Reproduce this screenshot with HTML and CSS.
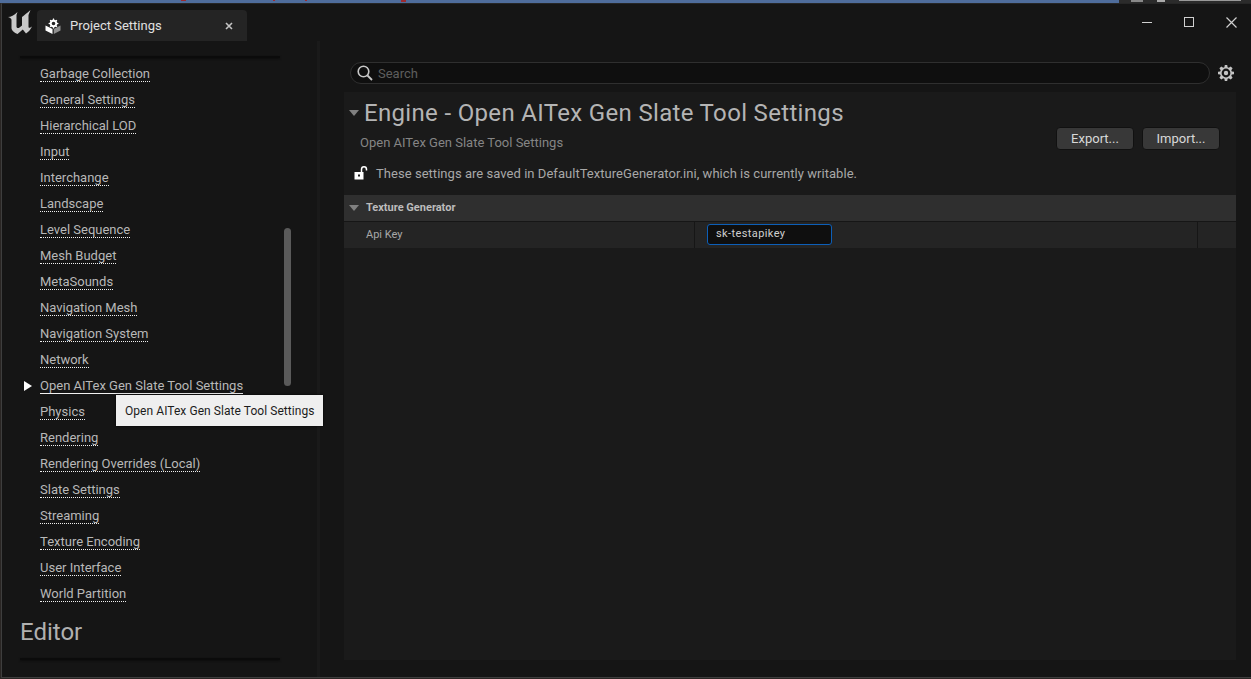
FILE: index.html
```html
<!DOCTYPE html>
<html lang="en">
<head>
    <meta charset="UTF-8">
    <title>Project Settings</title>
    <link rel="stylesheet" href="styles.css">
</head>
<body>

    <svg class="desktop-strip" width="1251" height="3">
        <rect width="1119" height="3" fill="#4f6d9c"/>
        <rect x="1119" width="132" height="3" fill="#2b2b2b"/>
        <rect x="181" width="5" height="1" fill="#9c2a30"/>
        <rect x="273" width="2" height="1" fill="#9c2a30"/>
        <rect x="305" width="2" height="1" fill="#9c2a30"/>
        <rect x="401" width="5" height="2" fill="#9c2a30"/>
        <rect x="1131" y="0" width="12" height="2" fill="#888"/>
        <rect x="1157" y="0" width="8" height="2" fill="#aaa"/>
        <rect x="1179" y="0" width="62" height="1" fill="#999"/>
    </svg>

    <div class="window">
        <div class="titlebar">
            <svg class="ue-logo" viewBox="0 0 24 24" width="24" height="24">
                <path fill="#c9c9c9" d="M0 7C3 7 6 5.500 9.500 2L8.500 5V16.500C8.500 18 10 18.500 11.500 17.500L14 15.500V7C16 5.500 19 3 22.500 0L20.500 5V16.500C20.500 18 21.500 18.500 24 16.500C22.500 19.500 21 21.500 18 23.500L14.800 19.500L9.500 24C6.500 23 3.500 20.500 3.500 18V10C3.500 8.500 2 7.500 0 7Z"/>
            </svg>
            <div class="tab">
                <svg class="tab-icon" viewBox="0 0 16 16" width="16" height="16">
                    <path fill="#fff" d="M8 0.500L9 0.500L9.300 1.700L10.500 2.300L11.500 1.700L12.300 2.500L11.700 3.500L12.200 4.700L13.400 5V6L12.200 6.300L11.700 7.500L12.300 8.500L11.500 9.300L10.500 8.700L9.300 9.200L9 10.400H8L7.700 9.200L6.500 8.700L5.500 9.300L4.700 8.500L5.300 7.500L4.800 6.300L3.600 6V5L4.800 4.700L5.300 3.500L4.700 2.500L5.500 1.700L6.500 2.300L7.700 1.700ZM8.500 3.700A1.800 1.800 0 1 0 8.500 7.300A1.800 1.800 0 1 0 8.500 3.700Z" fill-rule="evenodd"/>
                    <path fill="#fff" d="M0.500 7.500L7.500 11V16L0.500 12.500Z"/>
                    <path fill="#8f8f8f" d="M15.500 7.500L8.800 11V16L15.500 12.500Z"/>
                </svg>
                <span class="tab-title">Project Settings</span>
                <svg class="tab-close" viewBox="0 0 8 8" width="8" height="8">
                    <path d="M1 1L7 7M7 1L1 7" stroke="#c4c4c4" stroke-width="1.600"/>
                </svg>
            </div>
            <div class="window-controls">
                <svg viewBox="0 0 10 10" width="10" height="10"><path d="M0 5.500H10" stroke="#d0d0d0"/></svg>
                <svg viewBox="0 0 10 10" width="10" height="10"><rect x="0.500" y="0.500" width="9" height="9" fill="none" stroke="#d0d0d0"/></svg>
                <svg viewBox="0 0 11 11" width="11" height="11"><path d="M0.500 0.500L10.500 10.500M10.500 0.500L0.500 10.500" stroke="#d0d0d0" stroke-width="1.200"/></svg>
            </div>
        </div>

        <div class="content">
            <div class="sidebar">
                <div class="group-line"></div>
                <ul class="nav-list">
                    <li><a>Garbage Collection</a></li>
                    <li><a>General Settings</a></li>
                    <li><a>Hierarchical LOD</a></li>
                    <li><a>Input</a></li>
                    <li><a>Interchange</a></li>
                    <li><a>Landscape</a></li>
                    <li><a>Level Sequence</a></li>
                    <li><a>Mesh Budget</a></li>
                    <li><a>MetaSounds</a></li>
                    <li><a>Navigation Mesh</a></li>
                    <li><a>Navigation System</a></li>
                    <li><a>Network</a></li>
                    <li class="active"><a>Open AITex Gen Slate Tool Settings</a></li>
                    <li><a>Physics</a></li>
                    <li><a>Rendering</a></li>
                    <li><a>Rendering Overrides (Local)</a></li>
                    <li><a>Slate Settings</a></li>
                    <li><a>Streaming</a></li>
                    <li><a>Texture Encoding</a></li>
                    <li><a>User Interface</a></li>
                    <li><a>World Partition</a></li>
                </ul>
                <h2 class="group-title">Editor</h2>
                <div class="group-line"></div>
                <div class="scroll-thumb"></div>
                <div class="tooltip">Open AITex Gen Slate Tool Settings</div>
            </div>

            <div class="main">
                <div class="search-row">
                    <div class="search-box">
                        <svg viewBox="0 0 16 16" width="16" height="16">
                            <circle cx="6.500" cy="6.500" r="5.300" fill="none" stroke="#c8c8c8" stroke-width="1.600"/>
                            <path d="M10.500 10.500L15 15" stroke="#c8c8c8" stroke-width="1.800"/>
                        </svg>
                        <span>Search</span>
                    </div>
                    <svg class="gear" viewBox="0 0 16 16" width="16" height="16">
                        <path fill-rule="evenodd" fill="#c4c4c4" d="M6.800 0H9.200L9.600 2.200L10.800 2.700L12.700 1.400L14.600 3.300L13.300 5.200L13.800 6.400L16 6.800V9.200L13.800 9.600L13.300 10.800L14.600 12.700L12.700 14.600L10.800 13.300L9.600 13.800L9.200 16H6.800L6.400 13.800L5.200 13.300L3.300 14.600L1.400 12.700L2.700 10.800L2.200 9.600L0 9.200V6.800L2.200 6.400L2.700 5.200L1.400 3.300L3.300 1.400L5.200 2.700L6.400 2.200ZM8 3.600A4.400 4.400 0 1 0 8 12.400A4.400 4.400 0 1 0 8 3.600ZM8 5.800A2.200 2.200 0 1 1 8 10.200A2.200 2.200 0 1 1 8 5.800Z"/>
                    </svg>
                </div>

                <div class="panel">
                    <div class="panel-head">
                        <div>
                            <div class="title-row">
                                <span class="arrow-down"></span>
                                <h1>Engine - Open AITex Gen Slate Tool Settings</h1>
                            </div>
                            <div class="subtitle">Open AITex Gen Slate Tool Settings</div>
                        </div>
                        <div class="head-buttons">
                            <button>Export...</button>
                            <button>Import...</button>
                        </div>
                    </div>

                    <div class="lock-row">
                        <svg viewBox="0 0 14 14" width="14" height="14">
                            <path d="M7.500 6V3.500C7.500 1.500 8.800 0.800 10 0.800C11.200 0.800 12.500 1.500 12.500 3.500V4.500" fill="none" stroke="#fff" stroke-width="1.500"/>
                            <path fill-rule="evenodd" fill="#fff" d="M0.500 6H9.500V13.500H0.500ZM4 8.500V10.500H6V8.500Z"/>
                        </svg>
                        <span>These settings are saved in DefaultTextureGenerator.ini, which is currently writable.</span>
                    </div>

                    <div class="category">
                        <span class="arrow-down small"></span>
                        <span>Texture Generator</span>
                    </div>
                    <div class="prop-row">
                        <div class="prop-name">Api Key</div>
                        <div class="prop-value">
                            <div class="text-input">sk-testapikey</div>
                        </div>
                        <div class="prop-extra"></div>
                    </div>
                </div>
            </div>
        </div>
    </div>

</body>
</html>
```

FILE: styles.css
```css
body {
    margin: 0;
    width: 1251px;
    height: 679px;
    overflow: hidden;
    background: #2a2624;
    font-family: Roboto, sans-serif;
    color: #b8b8b8;
}
.desktop-strip {
    display: block;
}
.window {
    height: 673px;
    margin-left: 1px;
    background: #151515;
    border-top: 1px solid #262626;
    border-left: 1px solid #3e3e3e;
    border-bottom: 1px solid #3e3e3e;
    display: flex;
    flex-direction: column;
}

/* Title bar */
.titlebar {
    height: 37px;
    display: flex;
    align-items: flex-start;
    flex-shrink: 0;
}
.ue-logo {
    margin: 6px 0 0 6px;
}
.tab {
    width: 210px;
    height: 31px;
    margin: 6px 0 0 5px;
    box-sizing: border-box;
    padding: 0 14px 0 8px;
    background: #242424;
    border-radius: 4px 4px 0 0;
    display: flex;
    align-items: center;
    color: #e0e0e0;
    font-size: 13px;
}
.tab-icon {
    margin-right: 9px;
}
.tab-title {
    flex: 1;
}
.window-controls {
    margin-left: auto;
    margin-right: 14px;
    margin-top: 13px;
    display: flex;
    gap: 32px;
}

/* Left side */
.content {
    flex: 1;
    display: flex;
    min-height: 0;
}
.sidebar {
    position: relative;
    width: 297px;
    flex-shrink: 0;
    border-right: 3px solid #1a1a1a;
    padding: 15px 0 0 18px;
}
.group-line {
    width: 260px;
    height: 2px;
    background: #0b0b0b;
    box-shadow: 0 1px 2px #0d0d0d;
}
.nav-list {
    list-style: none;
    margin: 3px 0 0;
    padding: 0;
}
.nav-list li {
    height: 26px;
    padding-left: 20px;
    display: flex;
    align-items: center;
    font-size: 13px;
    position: relative;
}
.nav-list a {
    line-height: 15px;
    border-bottom: 1px dotted #f0f0f0;
}
.nav-list .active a {
    border-bottom: 1px solid #f0f0f0;
}
.nav-list .active::before {
    content: "";
    position: absolute;
    left: 4px;
    top: 8px;
    border-left: 8px solid #fff;
    border-top: 5px solid transparent;
    border-bottom: 5px solid transparent;
}
.group-title {
    margin: 11px 0 12px;
    font-size: 24px;
    line-height: 28px;
    font-weight: 400;
    color: #b0b0b0;
}
.scroll-thumb {
    position: absolute;
    left: 282px;
    top: 187px;
    width: 7px;
    height: 158px;
    border-radius: 4px;
    background: #5a5a5a;
}
.tooltip {
    position: absolute;
    left: 114px;
    top: 354px;
    width: 207px;
    height: 31px;
    box-sizing: border-box;
    padding: 0 9px;
    line-height: 32px;
    font-size: 12px;
    letter-spacing: 0.06px;
    white-space: nowrap;
    background: #efefef;
    color: #1c1c1c;
    box-shadow: 0 0 2px #000;
}

/* Right side */
.main {
    flex: 1;
    min-width: 0;
    padding: 21px 15px 17px 24px;
    display: flex;
    flex-direction: column;
}
.search-row {
    display: flex;
    align-items: center;
    margin-left: 6px;
    height: 22px;
}
.search-box {
    width: 860px;
    height: 22px;
    flex-shrink: 0;
    box-sizing: border-box;
    display: flex;
    align-items: center;
    gap: 5px;
    padding-left: 6px;
    background: #0f0f0f;
    border: 1px solid #2f2f2f;
    border-radius: 11px;
    font-size: 13px;
    color: #5e5e5e;
}
.gear {
    margin-left: 8px;
}
.panel {
    flex: 1;
    margin-top: 8px;
    background: #1a1a1a;
}
.panel-head {
    display: flex;
    justify-content: space-between;
    padding-right: 16px;
}
.title-row {
    display: flex;
    align-items: center;
    height: 30px;
    margin-top: 6px;
}
.arrow-down {
    margin: 0 5px 0 5px;
    border-top: 6px solid #808080;
    border-left: 5px solid transparent;
    border-right: 5px solid transparent;
}
h1 {
    margin: 0;
    font-size: 24px;
    font-weight: 400;
    letter-spacing: 0.33px;
    color: #b4b4b4;
}
.subtitle {
    margin: 6px 0 0 16px;
    line-height: 18px;
    font-size: 13px;
    color: #858585;
}
.head-buttons {
    align-self: flex-end;
    display: flex;
    gap: 8px;
    margin-bottom: 2px;
}
button {
    width: 78px;
    height: 23px;
    padding: 0;
    font-family: inherit;
    font-size: 13px;
    color: #d8d8d8;
    background: #383838;
    border: 1px solid #111;
    border-radius: 4px;
}
.lock-row {
    display: flex;
    align-items: center;
    height: 20px;
    margin-top: 11px;
    padding-left: 10px;
    gap: 8px;
    font-size: 13px;
    letter-spacing: 0.04px;
    color: #a8a8a8;
}
.category {
    display: flex;
    align-items: center;
    height: 27px;
    padding-bottom: 1px;
    box-sizing: border-box;
    margin-top: 12px;
    background: #2f2f2f;
    border-bottom: 1px solid #161616;
    font-size: 11px;
    font-weight: 700;
    color: #bcbcbc;
}
.arrow-down.small {
    margin-right: 7px;
}
.prop-row {
    display: flex;
    height: 26px;
    background: #242424;
    font-size: 11px;
    color: #a8a8a8;
}
.prop-name {
    width: 351px;
    padding-left: 22px;
    line-height: 26px;
    box-sizing: border-box;
    border-right: 1px solid #161616;
}
.prop-value {
    width: 503px;
    box-sizing: border-box;
    padding: 2px 0 0 12px;
    border-right: 1px solid #161616;
}
.text-input {
    width: 125px;
    height: 21px;
    box-sizing: border-box;
    padding-left: 8px;
    line-height: 17px;
    background: #0f0f0f;
    border: 1px solid #0d5fb8;
    border-radius: 3px;
    color: #cfcfcf;
    letter-spacing: 0.4px;
}
.prop-extra {
    flex: 1;
}
```
